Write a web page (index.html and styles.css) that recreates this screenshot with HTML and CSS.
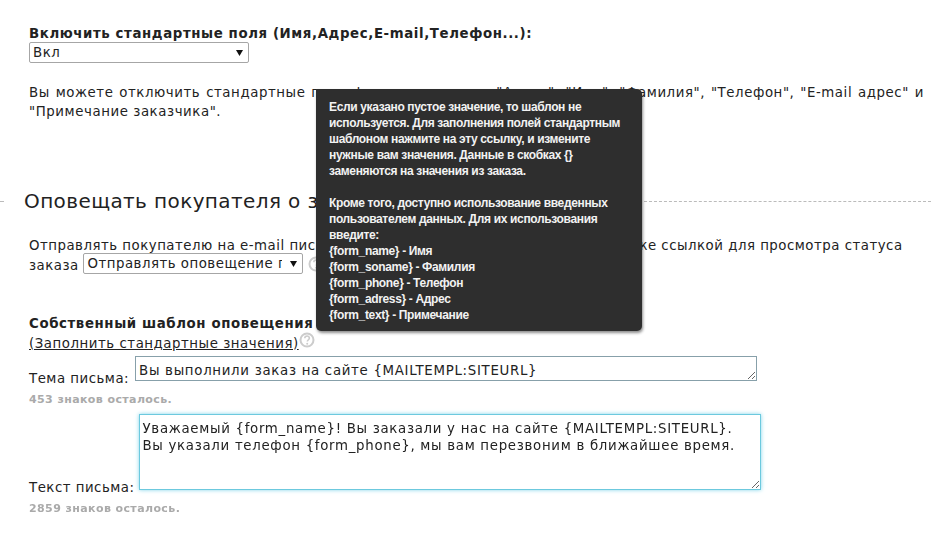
FILE: index.html
```
<!DOCTYPE html>
<html lang="ru">
<head>
<meta charset="utf-8">
<title>Настройки</title>
<link rel="stylesheet" href="styles.css">
</head>
<body>
<main class="page">
  <section class="block first">
    <div class="label-bold">Включить стандартные поля (Имя,Адрес,E-mail,Телефон...):</div>
    <select class="sel sel-on"><option>Вкл</option></select>
    <p class="desc">Вы можете отключить стандартные поля формы, такие как "Адрес", "Имя", "Фамилия", "Телефон", "E-mail адрес" и "Примечание заказчика".</p>
  </section>
  <h2 class="section-title"><span>Оповещать покупателя о заказе</span></h2>
  <section class="block">
    <p class="notify">Отправлять покупателю на e-mail письмо с деталями заказанного товара, а также ссылкой для просмотра статуса заказа <select class="sel sel-send"><option>Отправлять оповещение покупателю</option></select> <svg class="help" viewBox="0 0 16 16"><circle cx="8" cy="8" r="6.5" fill="#fff" stroke="#ccc" stroke-width="2"/><path d="M5.8 6.3c0-3 4.6-3 4.6-.2 0 1.600-2.100 1.700-2.100 3.500" fill="none" stroke="#ccc" stroke-width="1.600"/><circle cx="8.200" cy="11.700" r="1" fill="#ccc"/></svg></p>
    <div class="label-bold tpl">Собственный шаблон оповещения покупателя:</div>
    <div class="fill-row"><a class="fill-link" href="#">(Заполнить стандартные значения)</a><svg class="help help-fill" viewBox="0 0 16 16"><circle cx="8" cy="8" r="6.500" fill="#fff" stroke="#ccc" stroke-width="2"/><path d="M5.800 6.300c0-3 4.600-3 4.600-.2 0 1.600-2.100 1.700-2.100 3.500" fill="none" stroke="#ccc" stroke-width="1.600"/><circle cx="8.200" cy="11.700" r="1" fill="#ccc"/></svg></div>
    <div class="field subject-field"><label class="field-label">Тема письма:</label><textarea class="area area-subject">Вы выполнили заказ на сайте {MAILTEMPL:SITEURL}</textarea></div>
    <div class="count">453 знаков осталось.</div>
    <div class="field body-field"><label class="field-label">Текст письма:</label><textarea class="area area-body">Уважаемый {form_name}! Вы заказали у нас на сайте {MAILTEMPL:SITEURL}.
Вы указали телефон {form_phone}, мы вам перезвоним в ближайшее время.</textarea></div>
    <div class="count">2859 знаков осталось.</div>
  </section>
</main>
<div class="tooltip">Если указано пустое значение, то шаблон не используется. Для заполнения полей стандартным шаблоном нажмите на эту ссылку, и измените нужные вам значения. Данные в скобках {} заменяются на значения из заказа.<br><br>Кроме того, доступно использование введенных пользователем данных. Для их использования введите:<br>{form_name} - Имя<br>{form_soname} - Фамилия<br>{form_phone} - Телефон<br>{form_adress} - Адрес<br>{form_text} - Примечание</div>
</body>
</html>
```
FILE: styles.css
```
html, body { margin: 0; padding: 0; background: #fff; }
body { font-family: "DejaVu Sans", sans-serif; font-size: 13.33px; color: #222; overflow: hidden; height: 534px; }
.block { padding-left: 29px; }
.first { padding-top: 25px; }
.label-bold { font-weight: 700; line-height: 17px; letter-spacing: .6px; color: #222; }
.sel { appearance: none; -webkit-appearance: none; font-family: "DejaVu Sans", sans-serif; font-size: 13.33px; letter-spacing: .5px; color: #222; border: 1px solid #a6a6a6; border-radius: 2px; height: 21px; padding: 0 20px 0 3px; box-sizing: border-box; background: #fff url("data:image/svg+xml,%3Csvg xmlns='http://www.w3.org/2000/svg' width='7' height='6'%3E%3Cpath d='M0 0h7L3.500 6z' fill='%23111'/%3E%3C/svg%3E") no-repeat right 5px center; }
.sel-on { display: block; width: 220px; }
.sel-send { width: 220px; vertical-align: 2px; margin: -4px 0; }
.desc { margin: 20px 0 0; line-height: 19px; letter-spacing: .57px; width: 895px; text-align: justify; }
.section-title { font-weight: 400; font-size: 20px; line-height: 26px; margin: 67px 0 0; color: #222; letter-spacing: .4px; display: flex; align-items: center; }
.section-title span { padding: 0 0 0 20px; }
.section-title::before { content: ""; width: 4px; border-top: 1px dashed #bbb; }
.section-title::after { content: ""; flex: 1; border-top: 1px dashed #bbb; }
.notify { margin: 22px 0 0; line-height: 20px; letter-spacing: .5px; }
.help { width: 16px; height: 16px; vertical-align: -2px; }
.help-fill { vertical-align: 0; }
.tpl { margin-top: 39px; }
.fill-row { margin-top: 0; line-height: 19px; letter-spacing: .54px; }
.fill-link { color: #222; text-decoration: underline; }
.field { display: flex; align-items: flex-end; }
.field-label { letter-spacing: .5px; line-height: 17px; margin-bottom: -6px; }
.subject-field { margin-top: 3px; gap: 6px; }
.body-field { margin-top: 7px; gap: 4px; }
.area { font-family: "DejaVu Sans", sans-serif; font-size: 13.33px; color: #222; letter-spacing: .7px; line-height: 17px; box-sizing: border-box; background: #fff; margin: 0; outline: 0; }
.area-subject { width: 622px; height: 25px; border: 1px solid #87a0aa; padding: 5px 3px 2px; }
.area-body { width: 622px; height: 76px; border: 1px solid #6cc9de; box-shadow: 0 0 4px #7fd4ea; padding: 5px 3px 3px; }
.count { font-size: 11px; font-weight: 700; color: #aaa; margin-top: 12px; line-height: 14px; letter-spacing: .4px; }
.tooltip { position: absolute; left: 316px; top: 89px; width: 300px; height: 224px; padding: 10px 13px 8px; background: #2e2e2e; color: #f2f2f2; font-family: "Liberation Sans", sans-serif; font-size: 12px; font-weight: 700; line-height: 16px; border-radius: 0 5px 5px 5px; box-shadow: 1px 2px 3px rgba(0,0,0,.45); letter-spacing: -.35px; }
```
